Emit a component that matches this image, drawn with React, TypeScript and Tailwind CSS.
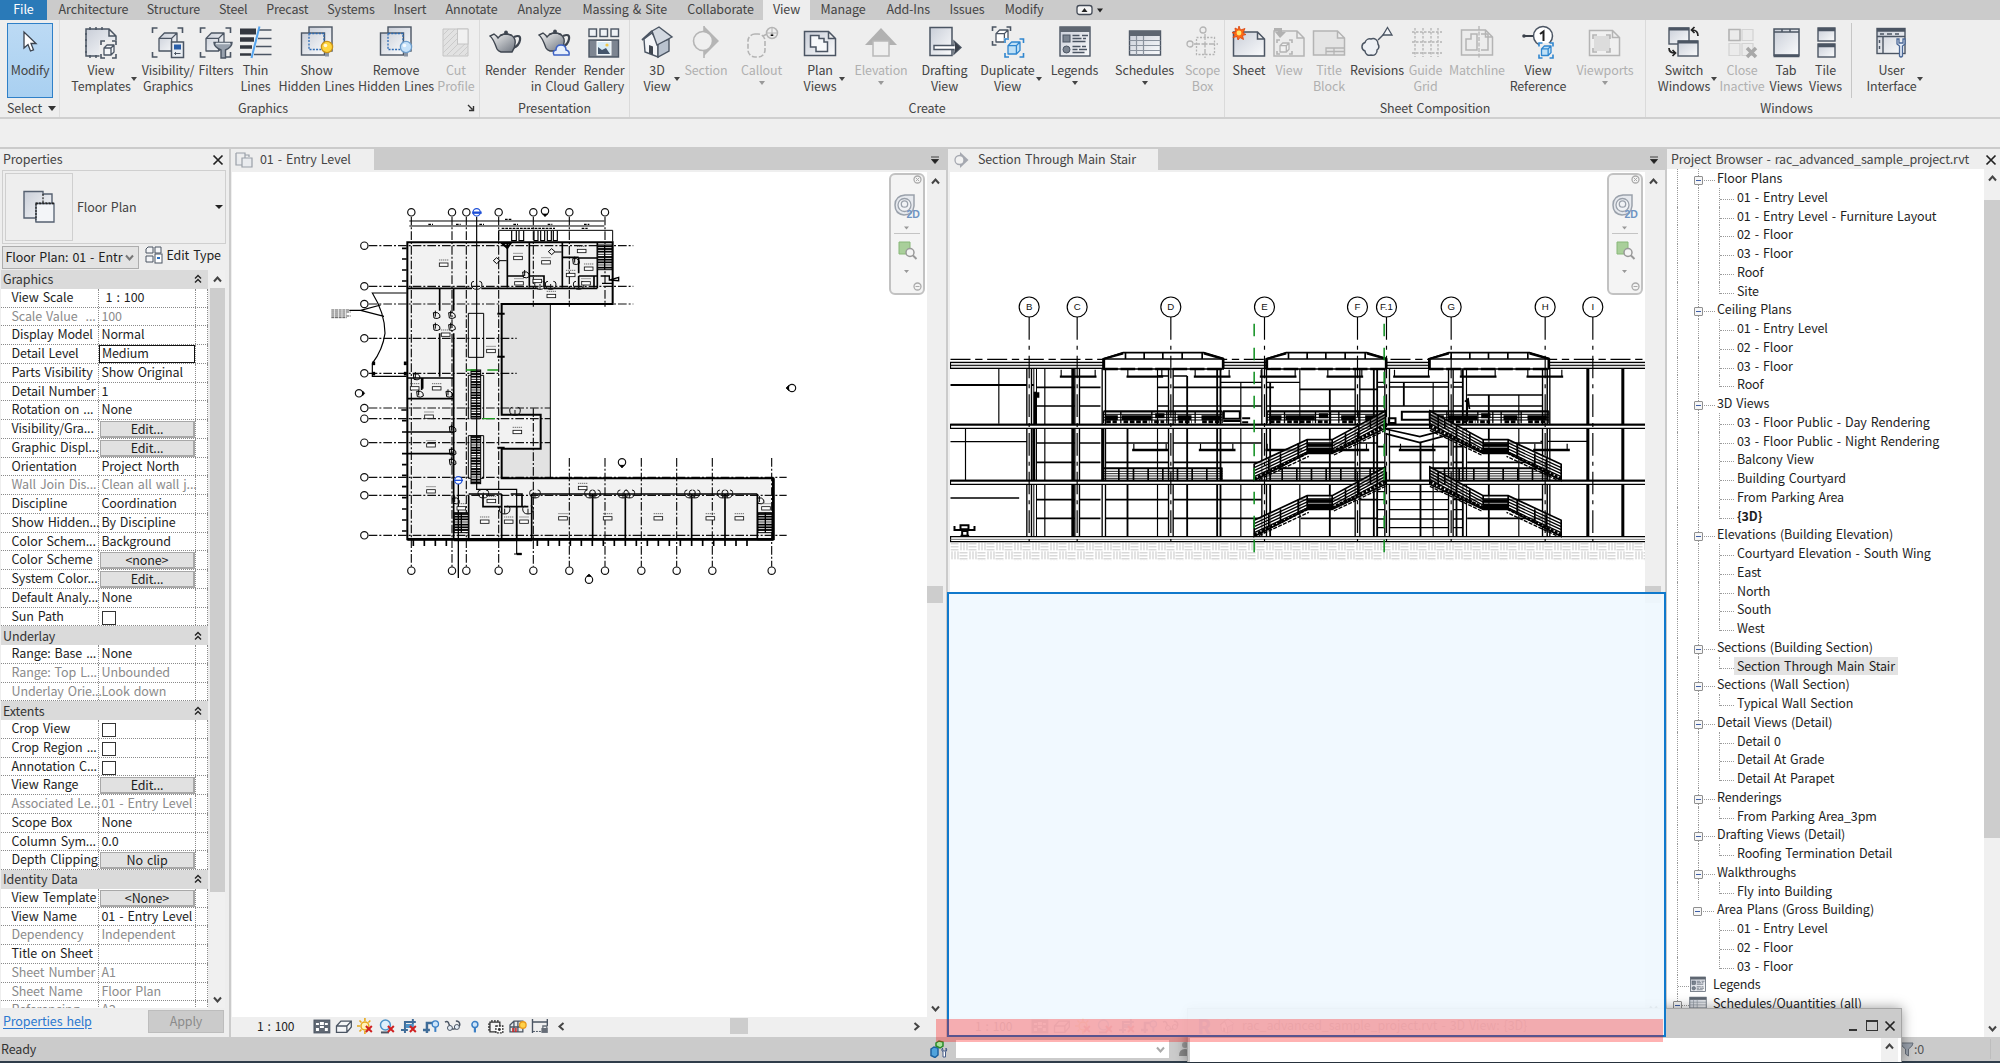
import React from "react";

type Pt = [number, number];
const D = "#4b5563";
const G = "#b4b4b4";

/* ---------- ribbon icons (34 x 34) ---------- */
const Brackets = ({ x, y, w, h, c = D, l = 5 }: { x: number; y: number; w: number; h: number; c?: string; l?: number }) => (
  <path
    d={`M${x} ${y + l}V${y}H${x + l}M${x + w - l} ${y}H${x + w}V${y + l}M${x + w} ${y + h - l}V${y + h}H${x + w - l}M${x + l} ${y + h}H${x}V${y + h - l}`}
    fill="none"
    stroke={c}
    strokeWidth="1.6"
  />
);
const Cube = ({ x, y, s, c = D, f = "url(#steel)" }: { x: number; y: number; s: number; c?: string; f?: string }) => (
  <path
    d={`M${x} ${y + s * 0.3}L${x + s * 0.3} ${y}H${x + s}V${y + s * 0.7}L${x + s * 0.7} ${y + s}H${x}ZM${x} ${y + s * 0.3}H${x + s * 0.7}V${y + s}M${x + s * 0.7} ${y + s * 0.3}L${x + s} ${y}`}
    fill={f}
    stroke={c}
    strokeWidth="1.3"
    strokeLinejoin="round"
  />
);
const Sheet = ({ x, y, w, h, c = D, f = "url(#steel)" }: { x: number; y: number; w: number; h: number; c?: string; f?: string }) => (
  <path d={`M${x} ${y}H${x + w - 7}L${x + w} ${y + 7}V${y + h}H${x}ZM${x + w - 7} ${y}V${y + 7}H${x + w}`} fill={f} stroke={c} strokeWidth="1.5" />
);
const Bulb = ({ c, f }: { c: string; f: string }) => (
  <>
    <path d="M25 27h4v4.500h-4z" fill="#8a94a3" />
    <circle cx="27" cy="22" r="5.600" fill={f} stroke={c} strokeWidth="1.300" />
    <circle cx="25.500" cy="20.500" r="1.800" fill="#fff" opacity=".8" />
  </>
);
const Hidden = () => (
  <>
    <rect x="9" y="2" width="23" height="24" fill="url(#steel)" stroke={D} strokeWidth="1.400" />
    <rect x="1.500" y="8" width="23" height="22" fill="url(#steel)" stroke={D} strokeWidth="1.400" />
    <path d="M9 8.500V24.500H24M9 8.500H24V24" fill="none" stroke="#2c6bb5" strokeWidth="1.300" strokeDasharray="2 1.300" />
  </>
);
const Teapot = () => (
  <>
    <path d="M25 12q7-3 6 3-1 6-7 8" fill="none" stroke="#3f4650" strokeWidth="2.200" />
    <path d="M8 24Q4 13 1 11L5 9q3 2 4 4Q12 9 17 9q7 0 9 6 1 6-3 12H12Q9 26 8 24Z" fill="url(#pot)" stroke="#3f4650" strokeWidth="1.400" />
    <path d="M11 10.500q6-3 12 0" stroke="#3f4650" strokeWidth="1.500" fill="none" />
    <circle cx="17" cy="7.500" r="1.900" fill="#3f4650" />
  </>
);

const icons: Record<string, React.ReactNode> = {
  templates: (
    <>
      <Sheet x={2} y={4} w={30} h={27} />
      <path d="M6 2v3M12 2v3M18 2v3M1 9h2M1 15h2M1 21h2M1 27h2M6 30v3M12 30v3" stroke={D} strokeWidth="1.500" />
      <path d="M15.500 15H34V34H15.500z" fill="#eee" />
      <Brackets x={17} y={16} w={15} h={17} l={4} />
      <Cube x={20} y={20} s={10} f="#f4f6f8" />
    </>
  ),
  visibility: (
    <>
      <Brackets x={1.500} y={3} w={30} h={29} />
      <Cube x={8} y={8} s={18} />
      <rect x="20.500" y="17" width="12" height="15.500" fill="#e9edf2" stroke={D} strokeWidth="1.500" />
      <rect x="23" y="19.500" width="7" height="5" fill="#2a5ea8" />
      <path d="M23.500 28.500h6M25 27l-1.500 1.500L25 30" stroke={D} fill="none" />
    </>
  ),
  filters: (
    <>
      <Brackets x={1.500} y={3} w={30} h={29} />
      <Cube x={7} y={8} s={18} />
      <path d="M15 17.500H33Q33 22 26.500 25V33H22V25Q15 22 15 17.500Z" fill="#98a1ad" stroke="#4b5563" strokeWidth="1.400" />
      <path d="M17 18.500h14" stroke="#dfe4ea" strokeWidth="1.500" />
    </>
  ),
  thin: (
    <>
      <path d="M1 6.500H17" stroke="#33373f" strokeWidth="6" />
      <path d="M1 14.500H15" stroke="#33373f" strokeWidth="4.500" />
      <path d="M1 22H13" stroke="#33373f" strokeWidth="3.500" />
      <path d="M1 29.500H12" stroke="#33373f" strokeWidth="2.500" />
      <path d="M20 5h12.500M19 13.500h13.500M17 21.500h15.500M15 29.500h17.500" stroke={D} strokeWidth="1.400" />
      <path d="M20.500 1.500L12.500 33" stroke="#55a5f0" strokeWidth="2" />
    </>
  ),
  show: (
    <>
      <Hidden />
      <Bulb c="#c9921a" f="#ffd63e" />
    </>
  ),
  remove: (
    <>
      <Hidden />
      <Bulb c="#6f9ecb" f="#c6e2fa" />
    </>
  ),
  cut: (
    <>
      <path d="M4 4h25v27H4z" fill="#e2e2e2" stroke="#c4c4c4" />
      <path d="M4 10l6-6M4 16L16 4M4 22L18 8M4 28L18 14M8 30L20 18M14 30L27 18M20 30l9-9M26 30l3-3" stroke="#cbcbcb" />
      <rect x="18.500" y="4" width="10.500" height="15" fill="#f1f1f1" stroke="#c4c4c4" />
    </>
  ),
  render: <Teapot />,
  cloud: (
    <>
      <g transform="translate(0 -1)">
        <Teapot />
      </g>
      <path d="M16 30q-2-4 2-5 0-5 5-5 5 0 5 5 4 1 3 5z" fill="#e7effc" stroke="#3d62c4" strokeWidth="1.500" />
    </>
  ),
  gallery: (
    <>
      {[2, 13, 24].map((x) => (
        <rect key={x} x={x} y="4" width="7.500" height="7.500" fill="#eef1f5" stroke={D} strokeWidth="1.400" />
      ))}
      <rect x="2" y="15" width="29.500" height="17" fill="#7d8591" stroke={D} strokeWidth="1.400" />
      <rect x="10" y="16.500" width="14" height="13.500" fill="#d7ecf6" stroke="#fff" />
      <path d="M11 29V22l4 3 4-2 4 6z" fill="#44556b" />
      <circle cx="20" cy="20" r="1.600" fill="#f2c94c" />
    </>
  ),
  house: (
    <>
      <path d="M4 14L12 8 18 18V32L5 27Z" fill="#f3f5f8" stroke={D} strokeWidth="1.400" />
      <path d="M18 18L29 14V26L18 32Z" fill="#b9c2ce" stroke={D} strokeWidth="1.400" />
      <path d="M12 6L19 2 32 12 17 20Z" fill="#d3d9e1" stroke={D} strokeWidth="1.400" />
      <path d="M12 6L2 15" stroke={D} strokeWidth="1.800" />
      <path d="M9 20l4 1.500V30L9 28z" fill="#3f4650" />
    </>
  ),
  section: (
    <>
      <path d="M15 1L30 16 15 31Z" fill="#b5b5b5" />
      <circle cx="14" cy="16" r="9.500" fill="#efefef" stroke="#b5b5b5" strokeWidth="1.600" />
      <path d="M15 1v5M15 26v7" stroke="#b5b5b5" strokeWidth="1.600" />
    </>
  ),
  callout: (
    <>
      <rect x="3" y="9" width="17" height="23" rx="7" fill="none" stroke={G} strokeWidth="1.600" strokeDasharray="5 2" />
      <path d="M18 11l4-2" stroke={G} strokeWidth="1.500" />
      <circle cx="27" cy="8" r="5.500" fill="none" stroke={G} strokeWidth="1.500" />
      <path d="M21.500 8h11M27 8V2.500M25 11l2-3 2 3" stroke={G} />
    </>
  ),
  plan: (
    <>
      <Sheet x={1.500} y={6.500} w={31} h={24} />
      <path d="M7.500 10.500H16V13.500H21V17H24.500V26.500H13V22H7.500Z" fill="#f7f9fb" stroke={D} strokeWidth="1.500" />
    </>
  ),
  elevation: (
    <>
      <path d="M17 3L33 20H1Z" fill="#b1b1b1" />
      <rect x="9" y="16" width="16" height="15" fill="#efefef" stroke="#b9b9b9" strokeWidth="1.500" />
    </>
  ),
  drafting: (
    <>
      <rect x="2" y="2.500" width="22" height="28" fill="url(#steel)" stroke={D} strokeWidth="1.500" />
      <path d="M6 20.500H26V16L33 22.500 26 29V24.500H6Z" fill="#fff" stroke={D} strokeWidth="1.400" />
      <path d="M27 17l5.500 5.500L27 28z" fill="#3a404a" />
    </>
  ),
  duplicate: (
    <>
      <Brackets x={1.500} y={2} w={18} h={18} l={4} />
      <Cube x={5} y={5} s={12} f="#fff" />
      <path d="M13 13h20v20H13z" fill="#eee" />
      <Brackets x={14} y={14} w={18.500} h={18} l={4} c="#2f86cf" />
      <Cube x={17} y={17} s={12} c="#2f86cf" f="#bfe0f6" />
    </>
  ),
  legends: (
    <>
      <rect x="2" y="2" width="30" height="29" fill="url(#steel)" stroke={D} strokeWidth="1.400" />
      <path d="M2 4.500h30" stroke="#5e6671" strokeWidth="5" />
      <rect x="5" y="10" width="7" height="7" fill="#7b8490" stroke={D} />
      <circle cx="8.500" cy="24.500" r="3.500" fill="#7b8490" stroke={D} />
      <path d="M14.500 10.500h7M24 10.500h6M14.500 13.500h9M25 13.500h3M14.500 16.500h13M14.500 21.500h8M24 21.500h4M14.500 24.500h5M21 24.500h8M14.500 27.500h12" stroke={D} strokeWidth="1.300" />
    </>
  ),
  schedules: (
    <>
      <rect x="1.500" y="6" width="31" height="24" fill="url(#steel)" stroke={D} strokeWidth="1.400" />
      <path d="M1.500 8.500h31" stroke="#5e6671" strokeWidth="5" />
      <path d="M1.500 15.500h31M1.500 20.500h31M1.500 25.500h31M8.500 11v19M15.500 11v19" stroke="#8a929d" strokeWidth="1.200" />
    </>
  ),
  scope: (
    <>
      <circle cx="17" cy="5" r="3" fill="none" stroke={G} strokeWidth="1.300" />
      <circle cx="4" cy="19" r="3" fill="none" stroke={G} strokeWidth="1.300" />
      <rect x="10.500" y="12.500" width="18" height="17" fill="none" stroke={G} strokeWidth="1.300" strokeDasharray="2 1.500" />
      <path d="M19 9v24M8 19h24" stroke={G} strokeWidth="1.300" strokeDasharray="6 1.500" />
    </>
  ),
  sheet: (
    <>
      <Sheet x={1.500} y={7} w={31} h={24} />
      <path d="M7 1l1.500 4L13 3.500 11 8l3 1.500-3.500 1 1 4L8 12.500 6 15l-1-3.500-4 1L3 9.500 0 7.500l3.500-.5L3 3l3 1.500z" fill="#ff6a13" stroke="#d8430f" strokeWidth=".8" />
      <circle cx="7" cy="8" r="2.400" fill="#ffe56b" />
    </>
  ),
  viewph: (
    <>
      <Sheet x={2} y={6} w={30} h={25} c={G} f="#ececec" />
      <Brackets x={5} y={15} w={15} h={14} l={3} c={G} />
      <Cube x={8} y={18} s={9} c={G} f="#f2f2f2" />
      <path d="M2 3h8v4h4l-6 6-5-6h3V6H2z" fill="#b1b1b1" />
    </>
  ),
  title: (
    <>
      <Sheet x={1.500} y={6} w={31} h={24} c={G} f="#e4e4e4" />
      <path d="M14 30V23H32M14 26.500H32M22 23v7" fill="none" stroke={G} strokeWidth="1.300" />
    </>
  ),
  revisions: (
    <>
      <path d="M18 15L27 6" stroke={D} strokeWidth="1.400" />
      <path d="M27.500 2.500L32 10H23Z" fill="#f2f4f7" stroke={D} strokeWidth="1.300" />
      <path d="M5 17.500a5 5 0 0 1 6-3.500 5 5 0 0 1 7 5 4.500 4.500 0 0 1-1 6 4.500 4.500 0 0 1-6 5 4.500 4.500 0 0 1-6-4 4.500 4.500 0 0 1 0-8.500z" fill="#eef1f5" stroke={D} strokeWidth="1.500" />
    </>
  ),
  grid: <path d="M6 3v29M14 3v29M22 3v29M29 3v29M3 7h30M3 17h30M3 28h30" stroke={G} strokeWidth="1.300" strokeDasharray="2.500 1.500" />,
  match: (
    <>
      <Sheet x={1.500} y={5} w={31} h={25} c={G} f="#ececec" />
      <path d="M6 25V14H11V9H17V25ZM21 9H28V25H21" fill="none" stroke={G} strokeWidth="1.500" />
      <path d="M19 1v32" stroke={G} strokeWidth="1.300" strokeDasharray="4 1.500" />
    </>
  ),
  reference: (
    <>
      <path d="M3 11H13" stroke="#3a404a" strokeWidth="2" />
      <circle cx="3" cy="11" r="1.800" fill="#3a404a" />
      <circle cx="22" cy="11" r="9.500" fill="#fff" stroke={D} strokeWidth="1.500" />
      <path d="M19 9l3.500-2.500V16" fill="none" stroke="#222" strokeWidth="2" />
      <path d="M18 18h15v15H18z" fill="#eee" />
      <Brackets x={18} y={18} w={14} h={15} l={3.500} c="#2f86cf" />
      <Cube x={20.500} y={21} s={9.500} c="#2f86cf" f="#bfe0f6" />
    </>
  ),
  viewports: (
    <>
      <Sheet x={1.500} y={5.500} w={30} h={25} c={G} f="#f0f0f0" />
      <rect x="6" y="11" width="16" height="15" fill="#dcdcdc" />
      <Brackets x={5} y={10} w={17} h={17} l={4} c={G} />
    </>
  ),
  switch: (
    <>
      <rect x="2" y="3" width="20" height="16" fill="url(#steel)" stroke={D} strokeWidth="1.400" />
      <path d="M2 4h20" stroke={D} strokeWidth="3" />
      <rect x="11" y="16" width="20" height="15" fill="url(#steel)" stroke={D} strokeWidth="1.400" />
      <path d="M11 17h20" stroke={D} strokeWidth="3" />
      <path d="M25 5q6 0 6 6M27.500 2L24.500 5l3 3M2 23q0 5 6 5M5.500 25l3 3-3 3" fill="none" stroke="#222" strokeWidth="1.700" />
    </>
  ),
  close: (
    <>
      <path d="M4 4.500h11v11H4zM17 4.500h11v11H17zM4 18.500h11v12H4zM17 18.500h11v12H17z" fill="#ebebeb" stroke="#d3d3d3" strokeWidth="1.200" />
      <path d="M4 4.500h11v11H4z" fill="none" stroke={G} strokeWidth="1.500" />
      <path d="M22 23l9 9M31 23l-9 9" stroke="#a8a8a8" strokeWidth="3.500" />
    </>
  ),
  tab: (
    <>
      <rect x="5" y="4" width="25" height="26" fill="url(#steel)" stroke={D} strokeWidth="1.500" />
      <path d="M5 7H30M13 4v3M21 4v3" stroke={D} strokeWidth="1.500" />
      <path d="M4.500 31h26" stroke={D} strokeWidth="2.500" />
    </>
  ),
  tile: (
    <>
      <rect x="9" y="3" width="17" height="13" fill="url(#steel)" stroke={D} strokeWidth="1.400" />
      <rect x="9" y="19" width="17" height="13" fill="url(#steel)" stroke={D} strokeWidth="1.400" />
      <path d="M9 4.500h17M9 20.500h17" stroke={D} strokeWidth="3.500" />
    </>
  ),
  ui: (
    <>
      <rect x="2" y="3.500" width="28" height="25" fill="url(#steel)" stroke={D} strokeWidth="1.400" />
      <path d="M2 5h28" stroke={D} strokeWidth="3.500" />
      <path d="M2 11.500h28M8 11v17" stroke={D} strokeWidth="1.400" />
      <path d="M5 9h4M12 9h5M20 9h4M4.500 15v3M4.500 21v3" stroke={D} strokeWidth="1.400" />
      <path d="M22 14v5l2.500 2V31q1.500 2 3 0V21L30 19v-5l-2 0v4h-4v-4z" fill="#e4ecf7" stroke="#4a6796" strokeWidth="1.300" />
    </>
  ),
};

type Btn = { i: string; t: string[]; c: string; off?: boolean; a?: "side" | "down" };
const groups: { title: string; c: string; tc?: string; corner?: boolean; b: Btn[] }[] = [
  {
    title: "Graphics", c: "w-[420px]", tc: "pr-[13px]", corner: true,
    b: [
      { i: "templates", t: ["View", "Templates"], c: "w-[60px] ml-[11px]", a: "side" },
      { i: "visibility", t: ["Visibility/", "Graphics"], c: "w-[54px] ml-[10px]" },
      { i: "filters", t: ["Filters"], c: "w-[34px] ml-[4px]" },
      { i: "thin", t: ["Thin", "Lines"], c: "w-[35px] ml-[5px]" },
      { i: "show", t: ["Show", "Hidden Lines"], c: "w-[75px] ml-[6px]" },
      { i: "remove", t: ["Remove", "Hidden Lines"], c: "w-[76px] ml-[4px]" },
      { i: "cut", t: ["Cut", "Profile"], c: "w-[38px] ml-[3px]", off: true },
    ],
  },
  {
    title: "Presentation", c: "w-[150px]",
    b: [
      { i: "render", t: ["Render"], c: "w-[39px] ml-[6px]" },
      { i: "cloud", t: ["Render", "in Cloud"], c: "w-[50px] ml-[5px]" },
      { i: "gallery", t: ["Render", "Gallery"], c: "w-[40px] ml-[4px]" },
    ],
  },
  {
    title: "Create", c: "w-[595px]",
    b: [
      { i: "house", t: ["3D", "View"], c: "w-[34px] ml-[10px]", a: "side" },
      { i: "section", t: ["Section"], c: "w-[44px] ml-[10px]", off: true },
      { i: "callout", t: ["Callout"], c: "w-[43px] ml-[12px]", off: true, a: "down" },
      { i: "plan", t: ["Plan", "Views"], c: "w-[38px] ml-[18px]", a: "side" },
      { i: "elevation", t: ["Elevation"], c: "w-[52px] ml-[16px]", off: true, a: "down" },
      { i: "drafting", t: ["Drafting", "View"], c: "w-[49px] ml-[13px]" },
      { i: "duplicate", t: ["Duplicate", "View"], c: "w-[57px] ml-[10px]", a: "side" },
      { i: "legends", t: ["Legends"], c: "w-[49px] ml-[14px]", a: "down" },
      { i: "schedules", t: ["Schedules"], c: "w-[59px] ml-[16px]", a: "down" },
      { i: "scope", t: ["Scope", "Box"], c: "w-[37px] ml-[10px]", off: true },
    ],
  },
  {
    title: "Sheet Composition", c: "w-[421px]",
    b: [
      { i: "sheet", t: ["Sheet"], c: "w-[32px] ml-[8px]" },
      { i: "viewph", t: ["View"], c: "w-[32px] ml-[8px]", off: true },
      { i: "title", t: ["Title", "Block"], c: "w-[32px] ml-[8px]", off: true },
      { i: "revisions", t: ["Revisions"], c: "w-[54px] ml-[5px]" },
      { i: "grid", t: ["Guide", "Grid"], c: "w-[35px] ml-[4px]", off: true },
      { i: "match", t: ["Matchline"], c: "w-[58px] ml-[5px]", off: true },
      { i: "reference", t: ["View", "Reference"], c: "w-[58px] ml-[3px]" },
      { i: "viewports", t: ["Viewports"], c: "w-[58px] ml-[9px]", off: true, a: "down" },
    ],
  },
  {
    title: "Windows", c: "w-[281px] border-r-0",
    b: [
      { i: "switch", t: ["Switch", "Windows"], c: "w-[54px] ml-[11px]", a: "side" },
      { i: "close", t: ["Close", "Inactive"], c: "w-[46px] ml-[8px]", off: true },
      { i: "tab", t: ["Tab", "Views"], c: "w-[34px] ml-[4px]" },
      { i: "tile", t: ["Tile", "Views"], c: "w-[35px] ml-[5px]" },
      { i: "|", t: [], c: "" },
      { i: "ui", t: ["User", "Interface"], c: "w-[51px] ml-[14px]", a: "side" },
    ],
  },
];

const Caret = ({ c = "border-t-[#444]" }: { c?: string }) => (
  <span className={`block h-0 w-0 border-x-[3px] border-t-[4px] border-x-transparent ${c}`} />
);

const RibbonButton = ({ b }: { b: Btn }) =>
  b.i === "|" ? (
    <span className="mt-[3px] ml-[8px] h-[75px] w-px bg-[#c6c6c6]" />
  ) : (
    <div className={`relative flex shrink-0 flex-col items-center pt-[5px] ${b.c} ${b.off ? "text-[#b0b0b0]" : "text-[#444]"}`}>
      <svg viewBox="0 0 34 34" className="h-[34px] w-[34px] shrink-0">{icons[b.i]}</svg>
      <div className="mt-[3px] text-center leading-[16px] whitespace-nowrap">
        {b.t.map((s) => (
          <div key={s}>{s}</div>
        ))}
      </div>
      {b.a === "side" && (
        <span className="absolute top-[57px] -right-[6px]">
          <Caret />
        </span>
      )}
      {b.a === "down" && (
        <span className="mt-[3px]">
          <Caret c={b.off ? "border-t-[#999]" : "border-t-[#444]"} />
        </span>
      )}
    </div>
  );

const tabs: [string, string][] = [
  ["Architecture", "w-[88px] ml-[2.5px]"], ["Structure", "w-[72px]"], ["Steel", "w-[47.500px]"], ["Precast", "w-[60.500px]"],
  ["Systems", "w-[67px]"], ["Insert", "w-[51px]"], ["Annotate", "w-[72px]"], ["Analyze", "w-[64px]"], ["Massing & Site", "w-[106.500px]"],
  ["Collaborate", "w-[85px]"], ["View", "w-[47px] bg-[#eee]"], ["Manage", "w-[66px]"], ["Add-Ins", "w-[64.500px]"], ["Issues", "w-[53px]"], ["Modify", "w-[61px]"],
];

const Ribbon = () => (
  <>
    <div className="flex h-[20px] shrink-0 items-stretch bg-[#cbcbcb] leading-[18px] whitespace-nowrap text-[#444]">
      <div className="w-[47px] bg-[#2a7ab8] text-center text-white">File</div>
      {tabs.map(([t, c]) => (
        <div key={t} className={`flex shrink-0 justify-center ${c}`}>{t}</div>
      ))}
      <svg viewBox="0 0 28 20" className="ml-[21px] h-[20px] w-[28px]">
        <rect x="1" y="5.500" width="15" height="9" rx="2.500" fill="#f4f4f4" stroke="#444b57" strokeWidth="1.300" />
        <path d="M8.500 8l3 4h-6zM21 8.500h6l-3 4z" fill="#222" />
      </svg>
    </div>
    <div className="flex h-[99px] shrink-0 border-b-2 border-[#cfcfcf] bg-[#eee]">
      <div className="flex w-[60px] flex-col border-r border-[#dedede] pl-[7px] text-[#444]">
        <div className="mt-[3px] flex h-[75px] w-[46px] flex-col items-center border border-[#2f80c8] bg-gradient-to-b from-[#bcdaf4] to-[#a9d0f1]">
          <svg viewBox="0 0 16 24" className="mt-[6px] h-[24px] w-[16px]">
            <path d="M2 2V18L6 14.500 8.500 21 11.500 19.800 9 13.500H14Z" fill="#fff" stroke="#3b424d" strokeWidth="1.300" />
          </svg>
          <div className="mt-[8px] leading-[16px]">Modify</div>
        </div>
        <div className="mt-[2px] flex items-center gap-[6px] leading-[16px]">
          Select
          <span className="block h-0 w-0 border-x-[4px] border-t-[5px] border-x-transparent border-t-[#333]" />
        </div>
      </div>
      {groups.map((g) => (
        <div key={g.title} className={`relative flex shrink-0 flex-col border-r border-[#dadada] ${g.c}`}>
          <div className="flex h-[80px]">
            {g.b.map((b, k) => (
              <RibbonButton key={k} b={b} />
            ))}
          </div>
          <div className={`text-center leading-[16px] text-[#444] ${g.tc ?? ""}`}>{g.title}</div>
          {g.corner && (
            <svg viewBox="0 0 8 8" className="absolute right-[4px] bottom-[5px] h-[8px] w-[8px]">
              <path d="M1 1l4.500 4.500M6.500 2v4.500H2" fill="none" stroke="#333" strokeWidth="1.400" />
            </svg>
          )}
        </div>
      ))}
    </div>
  </>
);

/* ---------- shared bits ---------- */
const Chevron = ({ d, c = "#444" }: { d: "up" | "down" | "left" | "right"; c?: string }) => {
  const p = { up: "M2 7.500L5.500 3.500 9 7.500", down: "M2 3.500L5.500 7.500 9 3.500", left: "M7.500 2L3.500 5.500 7.500 9", right: "M3.500 2L7.500 5.500 3.500 9" }[d];
  return (
    <svg viewBox="0 0 11 11" className="h-[11px] w-[11px] shrink-0">
      <path d={p} fill="none" stroke={c} strokeWidth="2" />
    </svg>
  );
};
const Cross = () => (
  <svg viewBox="0 0 12 12" className="h-[12px] w-[12px]">
    <path d="M1.500 1.500l9 9M10.500 1.500l-9 9" stroke="#222" strokeWidth="1.700" />
  </svg>
);

/* ---------- properties palette ---------- */
type Row = [string, string, ("off" | "btn" | "check" | "sel")?];
const sections: [string, Row[]][] = [
  ["Graphics", [
    ["View Scale", " 1 : 100"], ["Scale Value  ...", "100", "off"], ["Display Model", "Normal"], ["Detail Level", "Medium", "sel"],
    ["Parts Visibility", "Show Original"], ["Detail Number", "1"], ["Rotation on ...", "None"], ["Visibility/Gra...", "Edit...", "btn"],
    ["Graphic Displ...", "Edit...", "btn"], ["Orientation", "Project North"], ["Wall Join Dis...", "Clean all wall j...", "off"],
    ["Discipline", "Coordination"], ["Show Hidden...", "By Discipline"], ["Color Schem...", "Background"], ["Color Scheme", "<none>", "btn"],
    ["System Color...", "Edit...", "btn"], ["Default Analy...", "None"], ["Sun Path", "", "check"],
  ]],
  ["Underlay", [["Range: Base ...", "None"], ["Range: Top L...", "Unbounded", "off"], ["Underlay Orie...", "Look down", "off"]]],
  ["Extents", [
    ["Crop View", "", "check"], ["Crop Region ...", "", "check"], ["Annotation C...", "", "check"], ["View Range", "Edit...", "btn"],
    ["Associated Le...", "01 - Entry Level", "off"], ["Scope Box", "None"], ["Column Sym...", "0.0"], ["Depth Clipping", "No clip", "btn"],
  ]],
  ["Identity Data", [
    ["View Template", "<None>", "btn"], ["View Name", "01 - Entry Level"], ["Dependency", "Independent", "off"], ["Title on Sheet", ""],
    ["Sheet Number", "A1", "off"], ["Sheet Name", "Floor Plan", "off"], ["Referencing ...", "A2", "off"],
  ]],
];

const PropRow = ({ r: [k, v, s] }: { r: Row }) => (
  <div className={`flex h-[18.750px] border-b border-dotted border-[#8a8a8a] bg-white leading-[15px] whitespace-pre ${s === "off" ? "text-[#8b8b8b]" : "text-[#1e1e1e]"}`}>
    <div className="w-[97px] pl-[10.500px]">{k}</div>
    <div className="flex w-[97px] border-l border-dotted border-[#8a8a8a]">
      {s === "btn" ? (
        <div className="mt-[1px] ml-[1px] h-[17px] w-[95px] border border-r-2 border-b-2 border-[#a8a8a8] bg-[#e1e1e1] text-center leading-[14px] text-[#1e1e1e]">{v}</div>
      ) : s === "check" ? (
        <div className="mt-[3px] ml-[3px] h-[14px] w-[14px] border border-[#333] bg-white" />
      ) : s === "sel" ? (
        <div className="h-[18px] w-[96px] border border-[#111] pl-[2px] leading-[14px]">{v}</div>
      ) : (
        <div className="pl-[2.500px]">{v}</div>
      )}
    </div>
    <div className="w-[13px] border-x border-dotted border-[#8a8a8a]" />
  </div>
);

const Properties = () => (
  <div className="flex w-[229px] shrink-0 flex-col bg-[#eee]">
    <div className="flex h-[21px] shrink-0 items-center justify-between pr-[5px] pl-[3px] text-[#444]">
      Properties
      <Cross />
    </div>
    <div className="ml-[2px] flex h-[74px] w-[224px] shrink-0 items-center border border-[#cfcfcf] pl-[2px]">
      <div className="flex h-[68px] w-[68px] items-center justify-center border border-[#cfcfcf]">
        <svg viewBox="0 0 34 34" className="h-[34px] w-[34px]">
          <path d="M2 1.500H21V4H30V31H14V28H2Z" fill="url(#steel)" stroke="#556070" strokeWidth="1.400" />
          <path d="M21 4V13M13.500 13H32" stroke="#222" strokeWidth="1.200" strokeDasharray="2 1.200" />
          <path d="M14 13.500H32V32H14Z" fill="#f3f5f8" stroke="#556070" strokeWidth="1.300" />
          <path d="M14 13.500V30M14 13.500H32" stroke="#222" strokeWidth="1.300" strokeDasharray="2 1.200" />
        </svg>
      </div>
      <span className="ml-[4px] flex-1 text-[#444]">Floor Plan</span>
      <span className="mr-[2px] block h-0 w-0 border-x-[4px] border-t-[4px] border-x-transparent border-t-[#222]" />
    </div>
    <div className="mt-[1px] flex h-[25px] shrink-0 items-start pl-[1.500px]">
      <div className="mt-[1px] flex h-[23px] w-[137px] items-center justify-between border border-[#adadad] bg-[#e3e3e3] pr-[3px] pl-[3px] text-[#222]">
        <span className="whitespace-nowrap">Floor Plan: 01 - Entr</span>
        <Chevron d="down" c="#777" />
      </div>
      <svg viewBox="0 0 18 18" className="mt-[1px] ml-[6px] h-[18px] w-[18px]">
        <path d="M1 3l2-2h5v6H1zM10 1h6v6h-6zM1 10h7v6H1z" fill="#f5f6f8" stroke="#4b5563" />
        <rect x="10" y="8" width="7" height="9" fill="#fff" stroke="#4b5563" />
        <path d="M12 11h3v2h-3z" fill="#2a6fc0" />
      </svg>
      <span className="ml-[4px] leading-[20px] text-[#222]">Edit Type</span>
    </div>
    <div className="flex h-[738px] shrink-0">
      <div className="ml-[1px] w-[207px] overflow-hidden">
        {sections.map(([h, rows]) => (
          <React.Fragment key={h}>
            <div className="flex h-[18.750px] items-center justify-between bg-[#dadada] pr-[6px] pl-[2px] leading-[17px] text-[#333]">
              <span className="-mt-px">{h}</span>
              <svg viewBox="0 0 8 10" className="h-[10px] w-[8px]">
                <path d="M1 4.500l3-3 3 3M1 8.500l3-3 3 3" fill="none" stroke="#222" strokeWidth="1.400" />
              </svg>
            </div>
            {rows.map((r) => (
              <PropRow key={r[0]} r={r} />
            ))}
          </React.Fragment>
        ))}
      </div>
      <div className="ml-[2px] flex w-[15px] flex-col items-center bg-[#f0f0f0] pb-[3px]">
        <div className="flex h-[18px] items-center"><Chevron d="up" /></div>
        <div className="h-[604px] w-full bg-[#cdcdcd]" />
        <div className="flex flex-1 items-end"><Chevron d="down" /></div>
      </div>
    </div>
    <div className="flex flex-1 items-center justify-between pr-[5px] pb-[3px] pl-[3px]">
      <span className="text-[#2b78d0] underline underline-offset-2">Properties help</span>
      <div className="h-[23px] w-[76px] border border-[#bdbdbd] bg-[#cbcbcb] text-center leading-[20px] text-[#8b8b8b]">Apply</div>
    </div>
  </div>
);

/* ---------- floor plan drawing (units are thirds of a pixel) ---------- */
const vx = [274, 396, 439, 536, 640, 748, 855];
const vy = [167, 289, 342, 445, 550, 654, 686, 758, 862, 916, 1036];
const Head = ({ x, y, c = "#111" }: { x: number; y: number; c?: string }) => (
  <circle cx={x} cy={y} r="11" fill="#fff" stroke={c} strokeWidth="3.500" />
);
const Tags = ({ p }: { p: Pt[] }) => (
  <>
    {p.map(([x, y]) => (
      <g key={`${x}-${y}`}>
        <rect x={x - 13} y={y - 4} width="26" height="10" fill="#fff" stroke="#111" strokeWidth="2.500" />
        <path d={`M${x - 14} ${y - 13}h28`} stroke="#555" strokeWidth="2.500" strokeDasharray="4 2" />
      </g>
    ))}
  </>
);
const Stripes = ({ x, y, w, h }: { x: number; y: number; w: number; h: number }) => (
  <>
    <rect x={x} y={y} width={w} height={h} fill="#fff" stroke="#000" strokeWidth="3" />
    {Array.from({ length: Math.floor(h / 8) }, (_, k) => (
      <path key={k} d={`M${x} ${y + 4 + k * 8}h${w}`} stroke="#000" strokeWidth={k % 4 === 3 ? 2.5 : 5.5} />
    ))}
  </>
);
const Door = ({ x, y, f = 1 }: { x: number; y: number; f?: number }) => (
  <path d={`M${x} ${y}v${16 * f}M${x} ${y + 16 * f}q-16 0-16 ${-16 * f}q0 ${-8 * f} 8 ${-8 * f}M${x} ${y + 16 * f}q16 0 16 ${-16 * f}q0 ${-8 * f}-8 ${-8 * f}`} fill="none" stroke="#111" strokeWidth="3" />
);
const FloorPlan = () => (
  <g transform="translate(88 18) scale(.33333)" fill="none" stroke="#000">
    <g stroke="none">
      <path d="M545 342H691V865H545Z" fill="#e2e2e2" />
      <path d="M262 157H878V342H545V674H662V776H545V865H1360V1048H262Z" fill="#f2f2f2" />
    </g>
    <g stroke="#111" strokeWidth="3.500" strokeDasharray="26 6 6 6">
      {vx.map((x, k) => (
        <path key={x} d={k < 4 ? `M${x} 80V1130` : k === 4 ? `M${x} 80V350M${x} 655V1130` : `M${x} 80V350M${x} 804V1130`} />
      ))}
      <path d="M964 804V1130M1070 804V1130M1177 804V1130M1355 804V1130" />
      {vy.map((y, k) => (
        <path key={y} d={`M146 ${y}H${k < 3 ? 940 : k < 5 ? 590 : k < 8 ? 690 : 1400}`} />
      ))}
    </g>
    {vx.map((x) => <Head key={x} x={x} y={67} />)}
    {[...vx, 964, 1070, 1177, 1355].map((x) => <Head key={x} x={x} y={1142} />)}
    {vy.map((y) => <Head key={y} x={133} y={y} />)}
    <Head x={470} y={67} c="#1d4fd7" />
    <path d="M457 68h28" stroke="#1d4fd7" strokeWidth="7" />
    <Head x={117} y={610} /><Head x={1416} y={594} /><Head x={675} y={63} /><Head x={906} y={817} /><Head x={807} y={1169} />
    <path d="M668 72l7 8 8-8zM1398 594l8-8v16zM899 826l7 8 7-8zM800 1159l7-7 7 7zM128 603v14l6-7z" fill="#000" strokeWidth="2" />
    <path d="M268 93H853M268 108H853M536 121H878V155M536 121V155" strokeWidth="3" />
    <path d="M555 88h20M325 103h14M408 103h14M478 103h14M580 103h14M683 103h14M792 103h16M545 115h160M785 115h18" strokeWidth="4" strokeDasharray="8 3" />
    <path d="M575 122v30h14v-30M597 122v30h14v-30M642 122v30h12v-30M662 122v30h12v-30M682 122v30h12v-30M700 122v30h12v-30" strokeWidth="3.500" />
    {/* exterior walls */}
    <path d="M262 157H878V342H545V674H662V776H545V865H1360V1048H262Z" strokeWidth="6" />
    <path d="M545 342H691V865" strokeWidth="3" />
    <path d="M262 295H456M484 295H655M672 295H832M832 157V295M562 157V292M562 258H612M628 157V292M628 258H672V292M727 157V292M776 204V250M776 204H832M776 258H832M776 258V292M822 258V292M727 202H776" strokeWidth="5" />
    <path d="M401 295V362M401 430V610M401 610V1048M359 295V362M359 430V560M262 564H305V600M305 564H401M262 626H401M246 726H401M246 791H401" strokeWidth="5" />
    <path d="M308 564V596M446 918V1048M489 918V950H545M545 912V1048M552 950H625M590 950V1048M635 912V1048M446 912H545M572 912H606V950" strokeWidth="5" />
    <path d="M635 912H1312M818 912V1048M916 912V1048M1115 912V1048M1215 912V1048M1312 912V1048M1312 1048H1362" strokeWidth="5" />
    <path d="M445 370h46v132h-46zM445 556h46v130M445 556v130M445 737h46v128h-46z" strokeWidth="3" />
    <path d="M262 1048H1360M1360 865V1050M401 1050H636" strokeWidth="8" />
    <path d="M246 207h14M246 240h14M246 273h14M246 175h14M244 660h16M246 692h14M246 824h14M246 856h14M246 890h14M246 923h14M246 957h14M246 990h14M246 1023h14" strokeWidth="5" />
    <path d="M280 1050v18M313 1050v18M346 1050v18M379 1050v18M652 1050v18M685 1050v18M718 1050v18M751 1050v18M784 1050v18M817 1050v18M850 1050v18M883 1050v18M916 1050v18M949 1050v18M982 1050v18M1015 1050v18M1048 1050v18M1081 1050v18M1115 1050v18M1148 1050v18M1181 1050v18M1215 1050v18M1248 1050v18M1281 1050v18" strokeWidth="5" />
    <Stripes x={453} y={540} w={29} h={146} />
    <Stripes x={453} y={737} w={29} h={144} />
    <Stripes x={403} y={968} w={42} h={60} />
    <Stripes x={1314} y={968} w={42} h={60} />
    <Stripes x={833} y={165} w={43} h={74} />
    <path d="M424 968v60M1336 968v60M854 165v74M842 258h26v14M846 280h32M870 270l26-8v10z" strokeWidth="4" />
    <path d="M470 80V898H590V1092M582 1092h24" strokeWidth="3.500" />
    <path d="M590 1092h15" strokeWidth="7" />
    <path d="M415 882V1150M415 1146v18" strokeWidth="4" />
    <Head x={415} y={871} c="#1d4fd7" />
    <path d="M402 871h27" stroke="#1d4fd7" strokeWidth="4" />
    <path d="M438 540h30M502 540h32M487 686h38" stroke="#1c9a1c" strokeWidth="4" />
    {/* terrace */}
    <path d="M260 309H157Q195 370 195 430Q188 480 157 520V559H260M88 361H122L182 345M122 361L192 379" strokeWidth="3.500" />
    <path d="M34 360h55M34 366h58M34 372h46M34 378h58M34 383h46" stroke="#555" strokeWidth="3" strokeDasharray="9 2" />
    <path d="M157 515h8v10h-8zM157 546h8v10h-8zM252 515h8v10h-8zM252 546h8v10h-8z" fill="#000" />
    {([[470, 282], [660, 282], [692, 282], [776, 282], [585, 660], [490, 908], [645, 908], [810, 908], [825, 908], [909, 908], [928, 908], [1110, 908], [1124, 908], [1208, 908], [1222, 908], [554, 956], [624, 956]] as Pt[]).map(([x, y]) => (
      <Door key={`${x}-${y}`} x={x} y={y} />
    ))}
    {([[350, 368], [396, 368], [350, 404], [396, 404], [290, 552], [300, 604], [388, 604], [398, 710], [398, 778], [398, 808], [408, 924], [768, 206], [618, 246], [1322, 924]] as Pt[]).map(([x, y]) => (
      <path key={`${x}-${y}`} d={`M${x - 10} ${y}h12q10 4 8 14q-8 6-18 2zM${x - 4} ${y - 6}v18`} strokeWidth="3" />
    ))}
    <path d="M546 160h26l-10 14zM532 371h22M532 500h22M532 773h22" strokeWidth="6" />
    <path d="M685 185l10-9 10 9-10 9zM705 186h20M520 212l10-9 10 9-10 9zM540 212h20" strokeWidth="3" />
    <Tags p={[[371, 223], [594, 203], [678, 216], [785, 182], [806, 235], [752, 254], [597, 279], [652, 272], [798, 279], [694, 317], [513, 482], [284, 594], [350, 594], [327, 679], [333, 765], [333, 903], [592, 725], [788, 893], [424, 954], [514, 932], [494, 994], [566, 994], [612, 994], [729, 984], [863, 984], [1015, 984], [1171, 984], [1258, 984], [1338, 954], [377, 433]]} />
  </g>
);

/* ---------- building section drawing (units are thirds of a pixel) ---------- */
const gridHeads: [number, string][] = [[266, "B"], [410, "C"], [691, "D"], [972, "E"], [1251, "F"], [1338, "F.1"], [1532, "G"], [1814, "H"], [1957, "I"]];
const Flight = () => (
  <g fill="none">
    <path d="M941 958L1100 884H1175L1335 798V850L1175 925H1100L941 1006Z" fill="#fff" fillOpacity=".5" strokeWidth="5" />
    {[10, 19, 28, 37].map((k) => (
      <path key={k} d={`M941 ${958 + k}L1100 ${884 + k}H1175L1335 ${798 + k}`} strokeWidth="4" />
    ))}
    <path d="M941 1002L1100 924M1175 920L1335 842" strokeWidth="9" strokeDasharray="9 4" />
    <path d="M955 1004L1105 934M1180 930L1335 856" strokeWidth="4" strokeDasharray="12 4" />
    <path d="M1100 900h75M1100 912h75M1100 920h75" strokeWidth="9" />
    <path d="M1073 895v42M1100 884v40M1175 884v38M1310 812v40M1290 822v30M985 940v40M1020 925v40M1215 865v40M1255 843v40" strokeWidth="5" />
  </g>
);
const Furniture = ({ x, w }: { x: number; w: number }) => (
  <g fill="none">
    <path d={`M${x} 799h${w}`} strokeWidth="7" />
    <path d={`M${x} 808h${w}M${x} 817h${w}M${x} 825h${w}`} strokeWidth="3" />
    <path d={`M${x + 5} 818h38M${x + 55} 818h88M${x + 155} 812h28M${x + 222} 818h42M${x + 294} 818h58`} strokeWidth="15" />
    <path d={`M${x + 8} 830h32M${x + 60} 830h78M${x + 152} 830h30M${x + 225} 830h40M${x + 296} 830h52`} strokeWidth="9" strokeDasharray="14 5" />
    <path d={`M${x + 52} 799v36M${x + 145} 799v36M${x + 190} 799v36M${x + 215} 799v36M${x + 275} 799v36M${x + w} 799v36M${x} 799v36`} strokeWidth="4" />
  </g>
);
const SectionDrawing = () => {
  const roofs = [0, 489, 977];
  return (
    <g transform="translate(-9.5 -27) scale(.33333)" stroke="#000" fill="none">
      <path d="M30 1192H2125V1246H30Z" fill="url(#earth)" stroke="none" />
      {/* curtain wall grid */}
      <path d="M288 727H480M288 783H480M288 894H480M288 952H480M288 1064H480M288 1120H480M651 727H1000M651 783H1000M495 894H963M495 952H963M495 1064H963M495 1120H963M1078 733H1310M980 783H1310M1175 894H1310M1080 952H1310M1080 1064H1310M1080 1120H1310M1312 726H1567M1312 783H1567M1580 750H1805M1580 783H1805M1312 905H1567M1312 952H1567M1580 952H1805M1580 1064H1805M1580 1120H1805M1580 894H1805" strokeWidth="5" />
      <path d="M840 712H1078M1312 712H1567M1800 889H1942M30 890H275M30 1059H236M651 693H740M1312 1040H1567M1312 1064H1567M1312 1094H1567M1312 1122H1567M1312 1148H1567" strokeWidth="4" />
      <path d="M30 720H280" strokeWidth="6" />
      <path d="M313 670V1175M651 670V1175M901 712V1175M1078 670V1175M1478 712V1175M1735 750V1175M175 670V836M75 850V1005M1578 670V1175" strokeWidth="3.500" />
      <path d="M561 850V1175M740 693V1175M989 712V1175M1168 733V1175M1390 712V783M1440 890V1175M1645 750V1175M1300 670V1175M1310 670V1175M1567 670V1175M1548 850V1175M830 670V1175M840 670V1175" strokeWidth="5.500" />
      <path d="M485 670V1175M495 670V1175M1820 670V1175M1828 670V1175" strokeWidth="4" />
      <path d="M487 850V1008M1942 670V1175M2047 670V1175M284 740V838M280 850V1008M397 670V1175" strokeWidth="9" />
      <path d="M280 670V1175M288 670V1175" strokeWidth="3" />
      <path d="M282 742h14v16h-14z" fill="#000" />
      {/* columns */}
      {[266, 410, 691, 971, 1251, 1340, 1531, 1813].map((x) => (
        <path key={x} d={`M${x - 7} 670h14V1175h-14z`} fill="#f4f4f4" strokeWidth="4" />
      ))}
      {/* slabs */}
      {[838, 1006].map((y) => (
        <g key={y}>
          <path d={`M30 ${y}H2125V${y + 12}H30Z`} fill="#fff" strokeWidth="3.500" />
          <path d={`M30 ${y + 1}H2125`} strokeWidth="6" />
        </g>
      ))}
      <path d="M30 1175H2125V1190H30Z" fill="#fff" strokeWidth="4" />
      <path d="M30 1183H2125" stroke="#777" strokeWidth="3" />
      {/* roof */}
      <path d="M30 643H2125" strokeWidth="4" strokeDasharray="60 14 22 14" />
      <path d="M30 652H2125V670H30Z" fill="#e4e4e4" strokeWidth="3.500" />
      <path d="M30 661H2125" strokeWidth="3" />
      {roofs.map((o) => (
        <g key={o} transform={`translate(${o})`}>
          <path d="M488 642L548 623H790L848 640V672H488Z" fill="#fff" strokeWidth="5" />
          <path d="M488 642H848" strokeWidth="5" />
          <path d="M488 642L548 625M790 625L848 642" strokeWidth="7" />
          <path d="M555 623V642M611 623V642M667 623V642M725 623V642M785 623V642" strokeWidth="5" />
          <path d="M490 640V672M848 640V672" strokeWidth="8" />
          <path d="M488 672H848" strokeWidth="7" strokeDasharray="44 8" />
        </g>
      ))}
      {[360, 560, 762, 960, 1160, 1360, 1560, 1760].map((x) => (
        <g key={x}>
          <path d={`M${x + 2} 674V694M${x + 104} 674V694`} strokeWidth="3.500" />
          <path d={`M${x - 2} 695h110`} strokeWidth="7" />
        </g>
      ))}
      {[575, 775, 975, 1176, 1375, 1778].map((x) => (
        <g key={x}>
          <path d={`M${x + 5} 896V914M${x + 102} 896V914`} strokeWidth="3.500" />
          <path d={`M${x} 915h110`} strokeWidth="7" />
        </g>
      ))}
      <Furniture x={489} w={356} />
      <Furniture x={980} w={355} />
      <Furniture x={1467} w={358} />
      <path d="M850 799h48v22h-48zM848 828h52M905 820h24M905 832h18M1384 800h84v24h-84zM1345 820h20v14h-20z" strokeWidth="6" />
      {[490, 980, 1467].map((x) => (
        <g key={x}>
          <path d={`M${x} 970h356`} strokeWidth="6" />
          <path d={`M${x} 979h356M${x} 986h356M${x} 993h356M${x} 1000h356`} strokeWidth="2.600" />
          <path d={`M${x + 45} 970v36M${x + 89} 970v36M${x + 133} 970v36M${x + 177} 970v36M${x + 221} 970v36M${x + 265} 970v36M${x + 309} 970v36M${x + 354} 970v36`} strokeWidth="5" />
        </g>
      ))}
      <path d="M1335 852L1438 875 1510 856M1335 866L1438 893 1530 868" strokeWidth="5" />
      <Flight />
      <g transform="translate(0 168)"><Flight /></g>
      <g transform="translate(2803 0) scale(-1 1)"><Flight /></g>
      <g transform="translate(2803 168) scale(-1 1)"><Flight /></g>
      <path d="M1580 760v70M1573 770l10-8 4 30" strokeWidth="5" />
      <path d="M42 1143v12h22M102 1143v12h-22M60 1141h24v12H60zM65 1158h16v14H65zM60 1172h26" strokeWidth="6" />
      {gridHeads.map(([x, t]) => (
        <g key={t}>
          <path d={`M${x} 516V1190`} strokeWidth="3.500" strokeDasharray="68 18 12 18" />
          <circle cx={x} cy="486" r="30" fill="#fff" strokeWidth="3.500" />
          <text x={x} y="496" textAnchor="middle" fontSize="29" fontFamily="Liberation Sans, sans-serif" fill="#111" stroke="none" className="tracking-normal">{t}</text>
        </g>
      ))}
      <path d="M941 536V1232M1331 536V1232" stroke="#0d8f1e" strokeWidth="4.500" strokeDasharray="38 34" />
    </g>
  );
};

/* ---------- view panes ---------- */
const NavBar = () => (
  <div className="absolute top-[1px] right-[2px] flex h-[122px] w-[36px] flex-col items-center rounded-[6px] border-2 border-[#c2c2c2] bg-[#f4f4f4]">
    <svg viewBox="0 0 32 118" className="h-[118px] w-[32px]" fill="none">
      <circle cx="26.500" cy="4.500" r="3.500" stroke="#aaa" strokeWidth="1.300" />
      <path d="M25 3l3 3M28 3l-3 3" stroke="#aaa" />
      <path d="M14 20H23V31Q22 40 13 40 4 39 4 30 4 21 14 20Z" fill="#e6e9ee" stroke="#9aa1ab" strokeWidth="1.500" />
      <circle cx="13.500" cy="30" r="6.500" fill="#f1f3f6" stroke="#9aa1ab" strokeWidth="1.300" />
      <circle cx="13.500" cy="29" r="3.200" stroke="#9aa1ab" strokeWidth="1.300" />
      <text x="15.500" y="43" fontSize="10.500" fontWeight="700" fontFamily="Liberation Sans, sans-serif" fill="#6f94c2">2D</text>
      <path d="M13 51.500h5l-2.500 3zM13 95h5l-2.500 3z" fill="#999" />
      <path d="M3 58.500H29" stroke="#c4c4c4" />
      <path d="M8 67H19V79H8Z" fill="#a9cf9a" stroke="#88b878" />
      <circle cx="19" cy="77.500" r="4" fill="#f4f4f4" stroke="#999" strokeWidth="1.500" />
      <path d="M22 80.500l3.500 3.500" stroke="#999" strokeWidth="2" />
      <circle cx="26.500" cy="111.500" r="3.500" stroke="#aaa" strokeWidth="1.300" />
      <path d="M24.500 111.500h4" stroke="#aaa" />
    </svg>
  </div>
);

const RedX = ({ x, y }: Record<"x" | "y", number>) => <path d={`M${x} ${y}l6 6M${x + 6} ${y}l-6 6`} stroke="#d02020" strokeWidth="2" />;
const controlIcons: React.ReactNode[] = [
  <><rect x="1" y="2" width="16" height="13" fill="#606873" stroke="#4b5563" /><path d="M3 5h3v2H3zM7 4h4v3H7zM12 5h3v2h-3zM3 10h3v3H3zM7 8h4v2H7zM12 10h3v3h-3z" fill="#fff" /></>,
  <><path d="M1.500 8L6 3H16.500V9L12 14.500H1.500ZM1.500 8H12V14.500M12 8L16.500 3" fill="#f4f6f8" stroke="#4b5563" strokeWidth="1.300" /></>,
  <><path d="M8 0v3M8 13v3M0 8h3M2.500 2.500l2 2M2.500 13.500l2-2M13.500 2.500l-2 2" stroke="#e8a91c" strokeWidth="1.600" /><circle cx="8" cy="8" r="4" fill="#fff3b8" stroke="#e8a91c" strokeWidth="1.500" /><RedX x={9} y={8} /></>,
  <><circle cx="7.500" cy="7" r="5" fill="#dff0fb" stroke="#4c92c8" strokeWidth="1.500" /><path d="M3 14.500h8" stroke="#4b5563" strokeWidth="2" /><RedX x={10} y={8} /></>,
  <><path d="M5 15V4H16M1 12H8M13 1v5" fill="none" stroke="#3f6c98" strokeWidth="2" /><path d="M6 6h8v4H6z" fill="#4c92c8" /><RedX x={10} y={8} /></>,
  <><path d="M5 15V5H12M1 12H8" fill="none" stroke="#3f6c98" strokeWidth="2.500" /><circle cx="13.500" cy="6" r="3.200" fill="#cfe6fa" stroke="#3b7fc4" strokeWidth="1.300" /><path d="M13.500 9v5" stroke="#3b7fc4" strokeWidth="2" /></>,
  <><path d="M1 4q3-2 4 2 2 6 5 5M12 3q4 0 4 4-2 4-6 4" fill="none" stroke="#4b5563" strokeWidth="1.500" /><circle cx="6" cy="10" r="2.500" fill="#e5eef7" stroke="#4b5563" /><circle cx="13" cy="9" r="2.500" fill="#e5eef7" stroke="#4b5563" /></>,
  <><circle cx="9" cy="6.500" r="3" fill="#cfe6fa" stroke="#3b7fc4" strokeWidth="1.500" /><path d="M9 9.500v5" stroke="#3b7fc4" strokeWidth="2.200" /></>,
  <><path d="M3 4H13V14H3ZM1 6h2M1 9h2M1 12h2M5 2v2M8 2v2M11 2v2" fill="#f4f4f4" stroke="#333" strokeWidth="1.300" /><rect x="9" y="8" width="7" height="7" fill="#fff" stroke="#333" strokeWidth="1.300" strokeDasharray="2 1" /><circle cx="12.500" cy="11.500" r="1.500" fill="#333" /></>,
  <><path d="M1 7L5 3H14V14H1ZM5 3v11M9 3v11M1 9h13" fill="#e8ebef" stroke="#4b5563" strokeWidth="1.300" /><path d="M4 14v-4M7 14v-4" stroke="#d02020" strokeWidth="1.500" /><circle cx="14" cy="7" r="3.300" fill="#ffd24a" stroke="#e89a1c" strokeWidth="1.300" /></>,
  <><path d="M1.500 1v14M16.500 1v7M1 4H17" fill="none" stroke="#4b5563" strokeWidth="1.400" /><path d="M2 13.500h8" stroke="#4b5563" strokeDasharray="2 1" /><rect x="10.500" y="10" width="6.500" height="5" fill="#666d77" /><path d="M12 10V8h4v2" fill="none" stroke="#666d77" strokeWidth="1.300" /></>,
];

const Pane = ({ title, icon, children, first }: { title: string; icon: React.ReactNode; children: React.ReactNode; first?: boolean }) => (
  <div className={`flex shrink-0 flex-col bg-[#efefef] ${first ? "w-[715px]" : "w-[717px]"}`}>
    <div className="flex h-[21px] shrink-0 items-center justify-between bg-[#cbcbcb] text-[#444]">
      <div className={`flex h-full items-center bg-[#eee] ${first ? "w-[143px] pl-[4px]" : "w-[210px] pl-[6px]"}`}>
        <svg viewBox="0 0 18 16" className="h-[16px] w-[18px]">{icon}</svg>
        <span className={first ? "ml-[7px]" : "ml-[6px]"}>{title}</span>
      </div>
      <svg viewBox="0 0 10 8" className="mr-[6px] h-[8px] w-[10px]">
        <path d="M1 1h8M1.500 3.500h7L5 7.500z" fill="#222" stroke="#222" strokeWidth=".8" />
      </svg>
    </div>
    <div className={`mt-[2px] flex h-[845px] shrink-0 ${first ? "ml-px" : "ml-[2px]"}`}>
      <div className="relative w-[695px] overflow-hidden bg-white">
        <svg className="block h-full w-full">{children}</svg>
        <NavBar />
      </div>
      <div className="flex w-[16px] flex-col items-center pt-[4px] pb-[3px]">
        <Chevron d="up" />
        <div className="mt-[399px] h-[17px] w-full bg-[#cdcdcd]" />
        <div className="flex flex-1 items-end"><Chevron d="down" /></div>
      </div>
    </div>
    <div className={`flex h-[20px] shrink-0 items-center pb-[2px] ${first ? "pl-[26px]" : "pl-[27px]"}`}>
      <span className="w-[56px] text-[12px] leading-none text-[#222]">1 : 100</span>
      <div className="flex gap-[4px]">
        {controlIcons.map((c, k) => (
          <svg key={k} viewBox="0 0 18 16" className="h-[16px] w-[17.800px]">{c}</svg>
        ))}
      </div>
      <span className="ml-[7px]"><Chevron d="left" /></span>
      <div className="ml-[163px] h-[16px] w-[18px] bg-[#cdcdcd]" />
      <span className="ml-[163px]"><Chevron d="right" /></span>
    </div>
  </div>
);

/* ---------- project browser ---------- */
const tree: [string, string[]][] = [
  ["Floor Plans", ["01 - Entry Level", "01 - Entry Level - Furniture Layout", "02 - Floor", "03 - Floor", "Roof", "Site"]],
  ["Ceiling Plans", ["01 - Entry Level", "02 - Floor", "03 - Floor", "Roof"]],
  ["3D Views", ["03 - Floor Public - Day Rendering", "03 - Floor Public - Night Rendering", "Balcony View", "Building Courtyard", "From Parking Area", "{3D}"]],
  ["Elevations (Building Elevation)", ["Courtyard Elevation - South Wing", "East", "North", "South", "West"]],
  ["Sections (Building Section)", ["Section Through Main Stair"]],
  ["Sections (Wall Section)", ["Typical Wall Section"]],
  ["Detail Views (Detail)", ["Detail 0", "Detail At Grade", "Detail At Parapet"]],
  ["Renderings", ["From Parking Area_3pm"]],
  ["Drafting Views (Detail)", ["Roofing Termination Detail"]],
  ["Walkthroughs", ["Fly into Building"]],
  ["Area Plans (Gross Building)", ["01 - Entry Level", "02 - Floor", "03 - Floor"]],
];
const Minus = ({ c }: { c: string }) => (
  <span className={`absolute flex h-[9px] w-[9px] items-center justify-center rounded-[1px] border border-[#8f8f8f] bg-[#f6f6f6] ${c}`}>
    <span className="h-px w-[5px] bg-[#3f5fa8]" />
  </span>
);
const treeRow = "flex h-[18.750px] items-stretch leading-[18px] whitespace-nowrap text-[#1e1e1e]";
const Browser = () => (
  <div className="flex flex-1 flex-col bg-[#eee]">
    <div className="flex h-[20px] shrink-0 items-center justify-between pt-px pr-[3px] pl-[4px] tracking-[-0.16px] text-[#444]">
      Project Browser - rac_advanced_sample_project.rvt
      <Cross />
    </div>
    <div className="flex h-[868px]">
      <div className="w-[317px] overflow-hidden bg-white">
        {tree.map(([h, kids], n) => (
          <React.Fragment key={h}>
            <div className={treeRow}>
              <div className="ml-[10px] w-[21px] border-l border-dotted border-[#9a9a9a]" />
              <div className={`relative w-[19px] ${n === tree.length - 1 ? "" : "border-l border-dotted border-[#9a9a9a]"}`}>
                <div className="mt-[11px] ml-[5px] w-[11px] border-t border-dotted border-[#9a9a9a]" />
                <Minus c="top-[7px] -left-[5px]" />
              </div>
              {h}
            </div>
            {kids.map((k, m) => (
              <div key={k} className={treeRow}>
                <div className="ml-[10px] w-[21px] border-l border-dotted border-[#9a9a9a]" />
                <div className={`w-[21px] ${n === tree.length - 1 ? "" : "border-l border-dotted border-[#9a9a9a]"}`} />
                <div className={`w-[15px] border-l border-dotted border-[#9a9a9a] ${m === kids.length - 1 ? "h-[12px]" : ""}`}>
                  <div className="mt-[11px] border-t border-dotted border-[#9a9a9a]" />
                </div>
                <span className={`px-[3px] ${k === "{3D}" ? "font-bold" : ""} ${k === "Section Through Main Stair" ? "bg-[#e3e3e3]" : ""}`}>{k}</span>
              </div>
            ))}
          </React.Fragment>
        ))}
        <div className={treeRow}>
          <div className="ml-[10px] w-[12px] border-l border-dotted border-[#9a9a9a]">
            <div className="mt-[11px] border-t border-dotted border-[#9a9a9a]" />
          </div>
          <svg viewBox="0 0 34 34" className="mt-[1px] mr-[6px] h-[17px] w-[18px]">{icons.legends}</svg>
          Legends
        </div>
        <div className={treeRow}>
          <div className="relative ml-[10px] w-[12px] border-l border-dotted border-[#9a9a9a]">
            <div className="mt-[11px] ml-[4px] border-t border-dotted border-[#9a9a9a]" />
            <Minus c="top-[7px] -left-[5px]" />
          </div>
          <svg viewBox="0 0 34 34" className="mr-[6px] h-[18px] w-[18px]">{icons.schedules}</svg>
          Schedules/Quantities (all)
        </div>
      </div>
      <div className="flex w-[16px] flex-col items-center bg-[#f0f0f0] pt-[4px] pb-[3px]">
        <Chevron d="up" />
        <div className="mt-[16px] h-[638px] w-full bg-[#cdcdcd]" />
        <div className="flex flex-1 items-end"><Chevron d="down" /></div>
      </div>
    </div>
  </div>
);

const FloatingWindow = () => (
  <div className="absolute top-[1008px] left-[1187px] flex h-[54px] w-[715px] flex-col border border-b-0 border-[#a5a5a5] bg-[#cbcbcb] shadow-[0_0_12px_rgba(0,0,0,0.4)]">
    <div className="flex h-[29px] shrink-0 items-center pt-[4px] pl-[9px] text-[#444]">
      <span className="w-[22px] text-[20px] leading-none font-black text-[#1c6db5]">R</span>
      <svg viewBox="0 0 34 34" className="mr-[7px] h-[16px] w-[16px]">{icons.house}</svg>
      <span className="flex-1">{"rac_advanced_sample_project.rvt - 3D View: {3D}"}</span>
      <span className="mt-[8px] mr-[9px] h-[2px] w-[8px] bg-[#333]" />
      <span className="mr-[6px] h-[11px] w-[12px] border border-t-2 border-[#333]" />
      <span className="mr-[5px]"><Cross /></span>
    </div>
    <div className="ml-[2px] flex flex-1 justify-end bg-white">
      <div className="flex w-[17px] justify-center bg-[#f0f0f0] pt-[3px]"><Chevron d="up" /></div>
      <div className="w-[3px] bg-white" />
    </div>
  </div>
);

const StatusBar = () => (
  <div className="flex h-[26px] shrink-0 items-center border-b-2 border-[#2f3d4a] bg-[#cbcbcb] pl-[1px] text-[#333]">
    <span className="w-[929px]">Ready</span>
    <svg viewBox="0 0 18 18" className="h-[18px] w-[18px]">
      <path d="M1 9l3-2 4 1v7l-3 2.500-4-2z" fill="#4fa3dc" stroke="#1c62a0" strokeWidth="1.500" />
      <path d="M6 3l3-2 4 1v4L10 8 6 6z" fill="#a8e09a" stroke="#2a8a2a" strokeWidth="1.500" />
      <path d="M12.500 8q-2 2 .5 4v5h2.500v-5q2.500-2 .5-4v3h-3z" fill="#fff" stroke="#445b86" />
    </svg>
    <div className="ml-[8px] flex h-[18px] w-[213px] items-center justify-end bg-white pr-[3px]"><Chevron d="down" c="#aaa" /></div>
    <svg viewBox="0 0 14 18" className="ml-[8px] h-[18px] w-[14px]">
      <circle cx="8" cy="5" r="3" fill="#999" /><path d="M2 16q0-7 6-7t6 7z" fill="#888" />
    </svg>
    <svg viewBox="0 0 14 16" className="ml-[709px] h-[16px] w-[14px]">
      <path d="M1 2H13Q13 5 8.500 8V15L5.500 13V8Q1 5 1 2Z" fill="#9aa2ad" stroke="#666e79" />
    </svg>
    <span className="text-[#555]">:0</span>
    <span className="ml-[66px] h-[20px] w-px bg-[#bdbdbd]" />
  </div>
);

export default function App() {
  return (
    <div className="relative flex h-[1063px] w-[2000px] flex-col overflow-hidden bg-[#efefef] font-[family-name:'Noto_Sans_CJK_KR',sans-serif] text-[12.5px] tracking-[-0.13px] [word-spacing:1.4px]">
      <svg className="absolute h-0 w-0">
        <defs>
          <linearGradient id="steel" x1="0" y1="0" x2="1" y2="1">
            <stop offset="0" stopColor="#c9ced8" /><stop offset="1" stopColor="#fafbfc" />
          </linearGradient>
          <linearGradient id="pot" x1="0" y1="0" x2="1" y2="1">
            <stop offset="0" stopColor="#f5f5f5" /><stop offset="1" stopColor="#6e757f" />
          </linearGradient>
          <pattern id="earth" width="54" height="54" patternUnits="userSpaceOnUse" x="30" y="1192">
            <path d="M0 4.500H24M0 13.500H24M0 22.500H24M31.500 0V24M40.500 0V24M49.500 0V24M4.500 27V51M13.500 27V51M22.500 27V51M27 31.500H51M27 40.500H51M27 49.500H51" stroke="#c6c6c6" strokeWidth="3" />
          </pattern>
        </defs>
      </svg>
      <Ribbon />
      <div className="h-[30px] shrink-0 border-b-2 border-[#cbcbcb]" />
      <div className="flex h-[888px] shrink-0">
        <Properties />
        <div className="w-[2px] bg-[#cbcbcb]" />
        <Pane
          first
          title="01 - Entry Level"
          icon={<path d="M1 1h9v2h4v2M1 1v12h6M7 6h10v9H7zM10 1v5" fill="#e9ebee" stroke="#9aa0a8" strokeWidth="1.200" />}
        >
          <FloorPlan />
        </Pane>
        <div className="w-[2px] bg-[#cbcbcb]" />
        <Pane
          title="Section Through Main Stair"
          icon={<><path d="M6 0l8.500 8L6 16z" fill="#a5a8b0" /><circle cx="5.500" cy="8" r="4.500" fill="#f2f2f2" stroke="#a5a8b0" strokeWidth="1.300" /></>}
        >
          <SectionDrawing />
        </Pane>
        <div className="w-[2px] bg-[#cbcbcb]" />
        <Browser />
      </div>
      <StatusBar />
      <FloatingWindow />
      <div className="absolute top-[592px] left-[947px] h-[445px] w-[719px] border-2 border-[#1079cc] bg-[#f0f8ff]/92" />
      <div className="absolute top-[1019px] left-[936px] h-[23px] w-[727px] bg-[#ff0000]/30" />
    </div>
  );
}
